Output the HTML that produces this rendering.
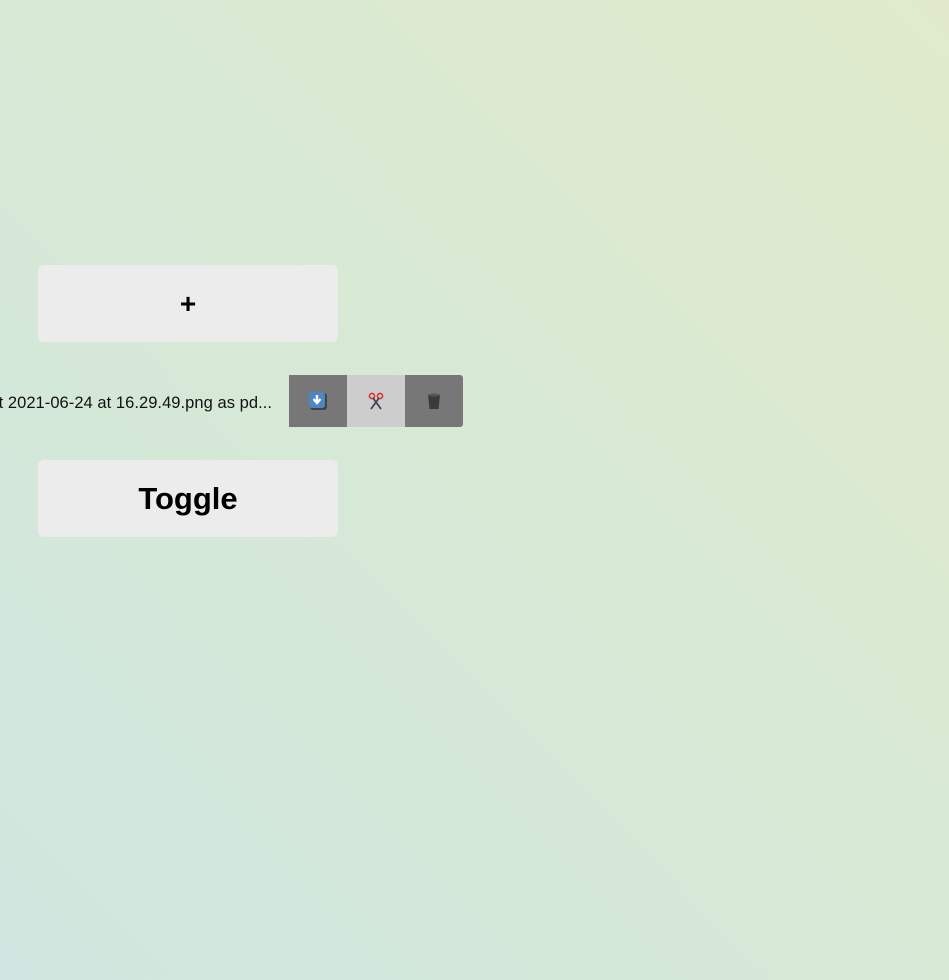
<!DOCTYPE html>
<html><head><meta charset="utf-8"><style>
html,body{margin:0;padding:0;width:949px;height:980px;overflow:hidden}
body{background:linear-gradient(225deg,#e0eacb 0%,#d7e9d5 50%,#cfe7e0 100%);font-family:"Liberation Sans",sans-serif;position:relative}
.btn{position:absolute;left:38px;width:300px;height:77px;background:#ececec;border-radius:6px;display:flex;align-items:center;justify-content:center;font-weight:bold;color:#000}
.row{position:absolute;top:375px;left:0;height:52px;width:463px}
.txt{position:absolute;left:0;width:272px;overflow:hidden;top:2px;height:52px;line-height:52px;font-size:16.5px;white-space:nowrap;color:#111;direction:rtl;text-align:right}
.txt span{direction:ltr;unicode-bidi:bidi-override;letter-spacing:0.05px}
.ic{position:absolute;top:0;width:58px;height:52px;display:flex;align-items:center;justify-content:center}
</style></head><body>
<div class="btn" style="top:265px;font-size:28px">+</div>
<div class="row">
<div class="txt"><span>Screenshot 2021-06-24 at 16.29.49.png as pd...</span></div>
<div class="ic" style="left:289px;background:#777">
<svg width="20" height="20" viewBox="0 0 20 20"><rect x="2" y="2" width="17" height="17" rx="3" fill="#222" opacity=".6"/><rect x="1" y="1" width="16" height="16" rx="3" fill="#4d86c8"/><path d="M9 4v7M5.5 8l3.5 4 3.5-4" stroke="#fff" stroke-width="2.4" fill="none"/></svg></div>
<div class="ic" style="left:347px;background:#cdcdcd">
<svg width="20" height="20" viewBox="0 0 20 20"><circle cx="6" cy="5" r="2.6" stroke="#d33" stroke-width="1.6" fill="none"/><circle cx="14" cy="5" r="2.6" stroke="#d33" stroke-width="1.6" fill="none"/><path d="M7 7l8 11M13 7l-8 11" stroke="#445" stroke-width="1.8"/></svg></div>
<div class="ic" style="left:405px;background:#777;border-radius:0 3px 3px 0">
<svg width="20" height="20" viewBox="0 0 20 20"><path d="M4 4h12l-1.5 14h-9z" fill="#3a3a3a"/><ellipse cx="10" cy="4" rx="6" ry="1.5" fill="#555"/></svg></div>
</div>
<div class="btn" style="top:460px;font-size:31px">Toggle</div>
</body></html>
